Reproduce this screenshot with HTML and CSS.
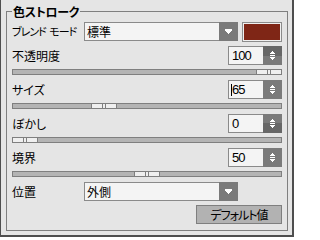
FILE: index.html
```html
<!DOCTYPE html>
<html lang="ja">
<head>
<meta charset="utf-8">
<link rel="stylesheet" href="styles.css">
</head>
<body>
<div class="window">
  <fieldset class="group">
    <legend class="group-title">色ストローク</legend>
    <div class="group-body">
      <div class="row row-top">
        <span class="label label-fixed label-tight">ブレンド モード</span>
        <div class="select">
          <span class="select-field">標準</span>
          <span class="drop-btn"><svg width="7" height="5" viewBox="0 0 7 5" shape-rendering="crispEdges"><path d="M0 0h7v2H6v1H5v1H4v1H3V4H2V3H1V2H0z" fill="#fff"/></svg></span>
        </div>
        <span class="swatch"><span class="swatch-color"></span></span>
      </div>

      <div class="row row-gap">
        <span class="label">不透明度</span>
        <div class="spin">
          <span class="spin-field">100</span>
          <span class="spin-btn hot-up"><svg width="7" height="9" viewBox="0 0 7 9" shape-rendering="crispEdges"><path d="M3 0h1v1h1v1h1v1H1V2h1V1h1zM1 4h5v1H1zM1 6h5v1H5v1H4v1H3V8H2V7H1z" fill="#fff"/></svg></span>
        </div>
      </div>
      <div class="slider"><span class="thumb" style="--v:1"></span></div>

      <div class="row row-gap-lg">
        <span class="label">サイズ</span>
        <div class="spin">
          <span class="spin-field"><span class="caret"></span>65</span>
          <span class="spin-btn"><svg width="7" height="9" viewBox="0 0 7 9" shape-rendering="crispEdges"><path d="M3 0h1v1h1v1h1v1H1V2h1V1h1zM1 4h5v1H1zM1 6h5v1H5v1H4v1H3V8H2V7H1z" fill="#fff"/></svg></span>
        </div>
      </div>
      <div class="slider"><span class="thumb" style="--v:0.325"></span></div>

      <div class="row row-gap-lg">
        <span class="label">ぼかし</span>
        <div class="spin">
          <span class="spin-field">0</span>
          <span class="spin-btn hot-down"><svg width="7" height="9" viewBox="0 0 7 9" shape-rendering="crispEdges"><path d="M3 0h1v1h1v1h1v1H1V2h1V1h1zM1 4h5v1H1zM1 6h5v1H5v1H4v1H3V8H2V7H1z" fill="#fff"/></svg></span>
        </div>
      </div>
      <div class="slider"><span class="thumb" style="--v:0"></span></div>

      <div class="row row-gap-lg">
        <span class="label">境界</span>
        <div class="spin">
          <span class="spin-field">50</span>
          <span class="spin-btn"><svg width="7" height="9" viewBox="0 0 7 9" shape-rendering="crispEdges"><path d="M3 0h1v1h1v1h1v1H1V2h1V1h1zM1 4h5v1H1zM1 6h5v1H5v1H4v1H3V8H2V7H1z" fill="#fff"/></svg></span>
        </div>
      </div>
      <div class="slider"><span class="thumb" style="--v:0.5"></span></div>

      <div class="row row-gap-lg">
        <span class="label label-fixed">位置</span>
        <div class="select">
          <span class="select-field">外側</span>
          <span class="drop-btn"><svg width="7" height="5" viewBox="0 0 7 5" shape-rendering="crispEdges"><path d="M0 0h7v2H6v1H5v1H4v1H3V4H2V3H1V2H0z" fill="#fff"/></svg></span>
        </div>
      </div>

      <button class="default-btn" type="button">デフォルト値</button>
    </div>
  </fieldset>
</div>
</body>
</html>
```
FILE: styles.css
```css
* {
  box-sizing: border-box;
}

html,
body {
  margin: 0;
  padding: 0;
}

body {
  font-family: "Noto Sans CJK JP", "Noto Sans", sans-serif;
  font-size: 12px;
  color: #000;
  font-feature-settings: "palt";
}

.window {
  width: 294px;
  height: 237px;
  background: #e5e5e5;
  border-left: 1px solid #4e4e4e;
  border-right: 2px solid #4e4e4e;
  border-bottom: 2px solid #4e4e4e;
  padding-top: 4px;
  display: flex;
  flex-direction: column;
}

.group {
  margin: 0 4px 0 5px;
  padding: 3px 5px 6px 5px;
  border: 1px solid #7f7f7f;
  min-width: 0;
}

.group-title {
  padding: 0 1px;
  font-weight: bold;
  font-size: 12px;
  line-height: 15px;
  letter-spacing: -0.3px;
}

.group-body {
  display: flex;
  flex-direction: column;
}

.row {
  display: flex;
  align-items: center;
  height: 19px;
}

.row-top {
  align-items: flex-start;
  height: 20px;
}

.row-gap {
  margin-top: 4px;
}

.row-gap-lg {
  margin-top: 5px;
}

.label {
  line-height: 19px;
  white-space: nowrap;
}

.label-fixed {
  width: 72px;
  flex: none;
}

.label-tight {
  font-size: 11px;
  letter-spacing: -1px;
  word-spacing: 2px;
  overflow: hidden;
}

.select {
  display: flex;
  width: 154px;
  height: 19px;
  flex: none;
}

.select-field {
  flex: 1;
  border: 1px solid #8a8a8a;
  border-right: 0;
  background: #f4f4f4;
  padding-left: 2px;
  line-height: 17px;
}

.drop-btn {
  width: 19px;
  flex: none;
  background: #7a7a7a;
  display: flex;
  align-items: center;
  justify-content: center;
}

.drop-btn svg,
.spin-btn svg {
  display: block;
}

.swatch {
  margin-left: 4px;
  width: 40px;
  height: 20px;
  border: 1px solid #8c8c8c;
  padding: 1px;
  background: #f0f0f0;
  display: flex;
}

.swatch-color {
  flex: 1;
  background: #7f2616;
}

.spin {
  margin-left: auto;
  display: flex;
  height: 19px;
}

.spin-field {
  width: 35px;
  border: 1px solid #8a8a8a;
  border-right: 0;
  background: #f4f4f4;
  padding-left: 3px;
  font-family: "Liberation Sans", Arial, sans-serif;
  font-size: 13px;
  letter-spacing: -1px;
  line-height: 17px;
  white-space: nowrap;
}

.caret {
  display: inline-block;
  width: 1px;
  height: 12px;
  margin-left: -1px;
  vertical-align: -2px;
  background: #000;
}

.spin-btn {
  width: 19px;
  background: #7a7a7a;
  display: flex;
  align-items: center;
  justify-content: center;
}

.spin-btn.hot-up {
  background: linear-gradient(#676767 50%, #7a7a7a 50%);
}

.spin-btn.hot-down {
  background: linear-gradient(#7a7a7a 50%, #676767 50%);
}

.slider {
  position: relative;
  height: 6px;
  margin-top: 4px;
  background: #b4b4b4;
  border: 1px solid #7f7f7f;
}

.thumb {
  position: absolute;
  top: -1px;
  bottom: -1px;
  width: 26px;
  left: calc(var(--v) * (100% - 24px) - 1px);
  border: 1px solid #7f7f7f;
  background:
    linear-gradient(to right,
      transparent 10px, #7f7f7f 10px, #7f7f7f 11px, transparent 11px,
      transparent 13px, #7f7f7f 13px, #7f7f7f 14px, transparent 14px),
    #efefef;
}

.default-btn {
  align-self: flex-end;
  margin-top: 4px;
  width: 86px;
  height: 19px;
  padding: 0;
  border: 1px solid #7f7f7f;
  background: #b2b2b2;
  color: #000;
  font-family: "Noto Sans CJK JP", "Noto Sans", sans-serif;
  font-size: 12px;
  font-feature-settings: "palt";
  letter-spacing: -1px;
  line-height: 17px;
}
```
